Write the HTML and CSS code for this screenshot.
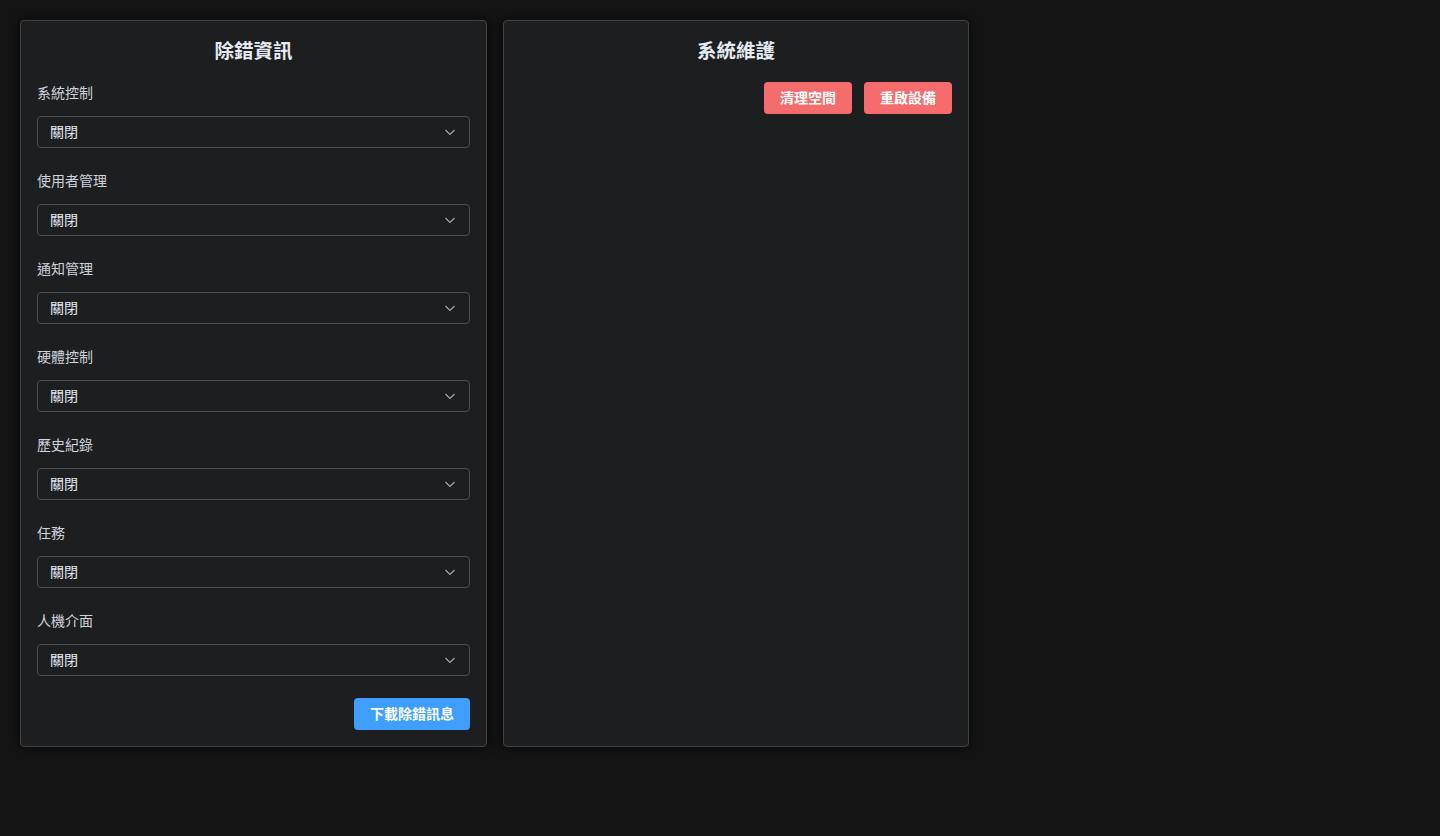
FILE: index.html
```html
<!DOCTYPE html>
<html lang="zh-Hant">
<head>
    <meta charset="UTF-8">
    <meta name="viewport" content="width=device-width, initial-scale=1.0">
    <title>除錯資訊</title>
    <link rel="stylesheet" href="styles.css">
</head>
<body>
    <div class="panels">
        <section class="card">
            <h2 class="card-title">除錯資訊</h2>

            <div class="field">
                <label class="field-label">系統控制</label>
                <div class="select"><span>關閉</span><svg class="chevron" viewBox="0 0 12 12"><polyline points="1.5,4 6,8.5 10.5,4"/></svg></div>
            </div>
            <div class="field">
                <label class="field-label">使用者管理</label>
                <div class="select"><span>關閉</span><svg class="chevron" viewBox="0 0 12 12"><polyline points="1.5,4 6,8.5 10.5,4"/></svg></div>
            </div>
            <div class="field">
                <label class="field-label">通知管理</label>
                <div class="select"><span>關閉</span><svg class="chevron" viewBox="0 0 12 12"><polyline points="1.5,4 6,8.5 10.5,4"/></svg></div>
            </div>
            <div class="field">
                <label class="field-label">硬體控制</label>
                <div class="select"><span>關閉</span><svg class="chevron" viewBox="0 0 12 12"><polyline points="1.5,4 6,8.5 10.5,4"/></svg></div>
            </div>
            <div class="field">
                <label class="field-label">歷史紀錄</label>
                <div class="select"><span>關閉</span><svg class="chevron" viewBox="0 0 12 12"><polyline points="1.5,4 6,8.5 10.5,4"/></svg></div>
            </div>
            <div class="field">
                <label class="field-label">任務</label>
                <div class="select"><span>關閉</span><svg class="chevron" viewBox="0 0 12 12"><polyline points="1.5,4 6,8.5 10.5,4"/></svg></div>
            </div>
            <div class="field">
                <label class="field-label">人機介面</label>
                <div class="select"><span>關閉</span><svg class="chevron" viewBox="0 0 12 12"><polyline points="1.5,4 6,8.5 10.5,4"/></svg></div>
            </div>

            <div class="actions">
                <button class="btn btn-primary">下載除錯訊息</button>
            </div>
        </section>

        <section class="card card-narrow">
            <h2 class="card-title">系統維護</h2>
            <div class="actions">
                <button class="btn btn-danger">清理空間</button>
                <button class="btn btn-danger">重啟設備</button>
            </div>
        </section>
    </div>
</body>
</html>
```

FILE: styles.css
```css
body {
    margin: 0;
    padding: 20px;
    background-color: #141414;
    color: #cfd3dc;
    font-family: Inter, "Noto Sans CJK TC", "Noto Sans", sans-serif;
    font-size: 14px;
}
.panels {
    display: flex;
    align-items: stretch;
    gap: 16px;
}
.card {
    width: 467px;
    box-sizing: border-box;
    background-color: #1d1e1f;
    border: 1px solid #414243;
    border-radius: 4px;
    padding: 16px;
    box-shadow: 0 0 12px rgba(0, 0, 0, 0.72);
}
.card-narrow {
    width: 466px;
}
.card-title {
    margin: 0 0 17px;
    text-align: center;
    font-size: 19.5px;
    line-height: 28px;
    font-weight: 700;
    color: #e5eaf3;
}
.field {
    margin-bottom: 22px;
}
.field-label {
    display: block;
    line-height: 22px;
    margin-bottom: 12px;
    color: #cfd3dc;
}
.select {
    display: flex;
    align-items: center;
    justify-content: space-between;
    height: 32px;
    box-sizing: border-box;
    padding: 0 13px 2px 12px;
    border: 1px solid #4c4d4f;
    border-radius: 4px;
    color: #e5eaf3;
}
.chevron {
    width: 12px;
    height: 12px;
    margin-top: 2px;
    fill: none;
    stroke: #a3a6ad;
    stroke-width: 1.2;
}
.actions {
    display: flex;
    justify-content: flex-end;
    gap: 12px;
}
.btn {
    height: 32px;
    padding: 0 16px 2px;
    border: none;
    border-radius: 4px;
    color: #fff;
    font-family: inherit;
    font-size: 14px;
    font-weight: 700;
    cursor: pointer;
}
.btn-primary {
    background-color: #409eff;
}
.btn-danger {
    background-color: #f56c6c;
}
```
